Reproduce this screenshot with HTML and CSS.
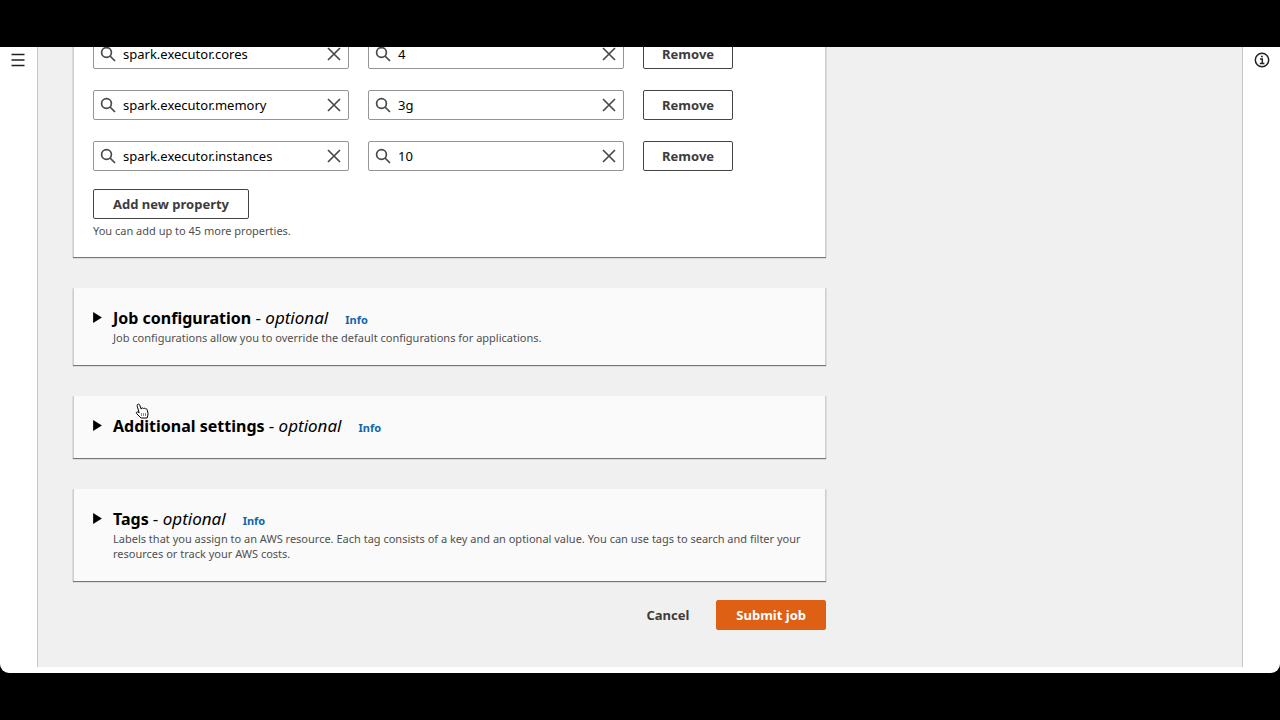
FILE: index.html
```html
<!DOCTYPE html>
<html lang="en">
<head>
<meta charset="utf-8">
<title>Submit job</title>
<link rel="stylesheet" href="styles.css">
</head>
<body>
<svg class="sprite" aria-hidden="true">
  <symbol id="search" viewBox="0 0 16 16"><circle cx="6.500" cy="6.500" r="4.900"/><path d="M10 10l5 5"/></symbol>
  <symbol id="close" viewBox="0 0 16 16"><path d="M2 2l12 12M14 2L2 14"/></symbol>
</svg>
<div class="window">
  <aside class="rail">
    <button class="icon-button" type="button" aria-label="Open navigation">
      <svg class="icon menu-icon" viewBox="0 0 16 16"><path d="M1.500 2.500h13M1.500 8h13M1.500 13.500h13"/></svg>
    </button>
  </aside>
  <main class="page">
    <form class="content">
      <section class="card properties">
        <div class="row">
          <div class="field"><svg class="icon"><use href="#search"/></svg><input type="text" aria-label="Key" value="spark.executor.cores"><button type="button" class="clear" aria-label="Clear"><svg class="icon"><use href="#close"/></svg></button></div>
          <div class="field"><svg class="icon"><use href="#search"/></svg><input type="text" aria-label="Value" value="4"><button type="button" class="clear" aria-label="Clear"><svg class="icon"><use href="#close"/></svg></button></div>
          <button type="button" class="button">Remove</button>
        </div>
        <div class="row">
          <div class="field"><svg class="icon"><use href="#search"/></svg><input type="text" aria-label="Key" value="spark.executor.memory"><button type="button" class="clear" aria-label="Clear"><svg class="icon"><use href="#close"/></svg></button></div>
          <div class="field"><svg class="icon"><use href="#search"/></svg><input type="text" aria-label="Value" value="3g"><button type="button" class="clear" aria-label="Clear"><svg class="icon"><use href="#close"/></svg></button></div>
          <button type="button" class="button">Remove</button>
        </div>
        <div class="row">
          <div class="field"><svg class="icon"><use href="#search"/></svg><input type="text" aria-label="Key" value="spark.executor.instances"><button type="button" class="clear" aria-label="Clear"><svg class="icon"><use href="#close"/></svg></button></div>
          <div class="field"><svg class="icon"><use href="#search"/></svg><input type="text" aria-label="Value" value="10"><button type="button" class="clear" aria-label="Clear"><svg class="icon"><use href="#close"/></svg></button></div>
          <button type="button" class="button">Remove</button>
        </div>
        <button type="button" class="button add">Add new property</button>
        <p class="hint">You can add up to 45 more properties.</p>
      </section>
      <section class="card section">
        <button type="button" class="toggle" aria-label="Expand Job configuration"><svg class="caret" viewBox="0 0 8 10"><path d="M0 0l8 5-8 5z"/></svg></button>
        <div class="section-text">
          <div class="heading"><h2>Job configuration <span class="optional">- <em>optional</em></span></h2><a href="#">Info</a></div>
          <p class="hint">Job configurations allow you to override the default configurations for applications.</p>
        </div>
      </section>
      <section class="card section">
        <button type="button" class="toggle" aria-label="Expand Additional settings"><svg class="caret" viewBox="0 0 8 10"><path d="M0 0l8 5-8 5z"/></svg></button>
        <div class="section-text">
          <div class="heading"><h2>Additional settings <span class="optional">- <em>optional</em></span></h2><a href="#">Info</a></div>
        </div>
        <svg class="pointer" viewBox="0 0 14 17"><path class="hand" d="M2.500 1.500c.8-.8 1.900-.3 2.200.6l1.500 4 .3-.8c.8-.7 1.500-.3 1.900.3.7-.7 1.500-.4 1.900.3.9-.5 1.700.1 1.900 1l.8 3.500c.2 2-.6 3-.9 4.600H6L2 11C.8 10 1.300 8.600 2.700 8.900l1.500.8-2-6.500c-.2-.7-.1-1.300.3-1.700z"/><path class="lines" d="M6.500 10v3M8.500 10v3M10.500 10v3"/></svg>
      </section>
      <section class="card section">
        <button type="button" class="toggle" aria-label="Expand Tags"><svg class="caret" viewBox="0 0 8 10"><path d="M0 0l8 5-8 5z"/></svg></button>
        <div class="section-text">
          <div class="heading"><h2>Tags <span class="optional">- <em>optional</em></span></h2><a href="#">Info</a></div>
          <p class="hint">Labels that you assign to an AWS resource. Each tag consists of a key and an optional value. You can use tags to search and filter your resources or track your AWS costs.</p>
        </div>
      </section>
      <div class="actions">
        <button type="button" class="button plain">Cancel</button>
        <button type="button" class="button primary">Submit job</button>
      </div>
    </form>
  </main>
  <aside class="rail">
    <button class="icon-button" type="button" aria-label="Open help panel">
      <svg class="icon info-icon" viewBox="0 0 16 16"><circle cx="8" cy="8" r="6.700"/><path d="M6 7h2.300v4.500M5.800 11.500h4.600M7 4.500h1.800"/></svg>
    </button>
  </aside>
</div>
</body>
</html>
```
FILE: styles.css
```css
* { box-sizing: border-box; }

body {
  margin: 0;
  height: 100vh;
  padding: 47px 0;
  background: #000;
  color: #000;
  font-family: "Noto Sans", "Open Sans", sans-serif;
  font-size: 13px;
}

button, input { font: inherit; }
button { cursor: pointer; }
h2, p { margin: 0; }

.sprite { position: absolute; width: 0; height: 0; }

.window {
  display: flex;
  height: 100%;
  padding-bottom: 6px;
  background: #fff;
  border-radius: 0 0 9px 9px;
  overflow: hidden;
}

.rail {
  flex: 0 0 37px;
  display: flex;
  justify-content: center;
  align-items: flex-start;
  padding-top: 5px;
}

.rail:first-child { padding-right: 1px; }

.icon-button, .clear, .toggle {
  display: flex;
  padding: 0;
  border: 0;
  background: none;
}

.icon {
  flex: none;
  width: 16px;
  height: 16px;
  fill: none;
  stroke: #4a4a4a;
  stroke-width: 1.7;
}

.icon-button .icon { stroke: #222; }
.icon-button .info-icon { stroke-width: 1.5; }

.page {
  flex: 1;
  min-width: 0;
  display: flex;
  flex-direction: column;
  justify-content: flex-end;
  padding: 0 35px 37px;
  border: solid #c8c8c8;
  border-width: 0 1px;
  background: #f0f0f0;
  overflow: hidden;
}

.content {
  display: flex;
  flex-direction: column;
  gap: 31px;
  width: 100%;
  max-width: 753px;
}

.card {
  border: solid #cfcfcf;
  border-width: 0 1px;
  background: #fff;
  box-shadow: 0 1px 1px #777;
}

.properties {
  display: flex;
  flex-direction: column;
  align-items: flex-start;
  padding: 20px 19px 19px;
}

.row {
  display: grid;
  grid-template-columns: 11fr 11fr 7fr;
  column-gap: 19px;
  justify-items: start;
  width: 100%;
  margin-bottom: 21px;
}

.row:last-of-type { margin-bottom: 18px; }

.field {
  display: flex;
  align-items: center;
  gap: 7px;
  width: 100%;
  height: 30px;
  padding: 0 6px;
  border: 1px solid #959595;
  border-radius: 2px;
}

.field input {
  flex: 1;
  min-width: 0;
  padding: 0;
  border: 0;
  background: none;
  color: #000;
  outline: none;
}

.button {
  height: 30px;
  padding: 0 18px;
  border: 1px solid #444;
  border-radius: 2px;
  background: #fff;
  color: #3c3c3c;
  font-weight: 700;
}

.hint {
  color: #505050;
  font-size: 11px;
  line-height: 15px;
}

.add { padding: 0 19px; }
.add + .hint { margin-top: 4px; }

.section {
  position: relative;
  display: flex;
  align-items: flex-start;
  gap: 11px;
  padding: 18px 19px 20px;
  background: #fafafa;
}

.toggle { padding-top: 6px; }

.caret {
  width: 9px;
  height: 11px;
  fill: #000;
}

.heading {
  display: flex;
  align-items: baseline;
  gap: 17px;
}

.heading h2 {
  font-size: 16px;
  line-height: 24px;
}

.heading .optional {
  font-size: 17px;
  line-height: 20px;
  font-weight: 400;
}

.heading a {
  color: #1166a8;
  font-size: 11px;
  line-height: 15px;
  font-weight: 700;
  text-decoration: none;
}

.pointer {
  position: absolute;
  top: 7px;
  left: 61px;
  width: 14px;
  height: 17px;
}

.hand { fill: #fff; stroke: #000; }
.lines { fill: none; stroke: #888; }

.actions {
  display: flex;
  justify-content: flex-end;
  gap: 8px;
  margin-top: -12px;
}

.plain {
  border-color: transparent;
  background: none;
}

.primary {
  padding: 0 19px;
  border-color: #dd6014;
  background: #dd6014;
  color: #fff;
}
```
